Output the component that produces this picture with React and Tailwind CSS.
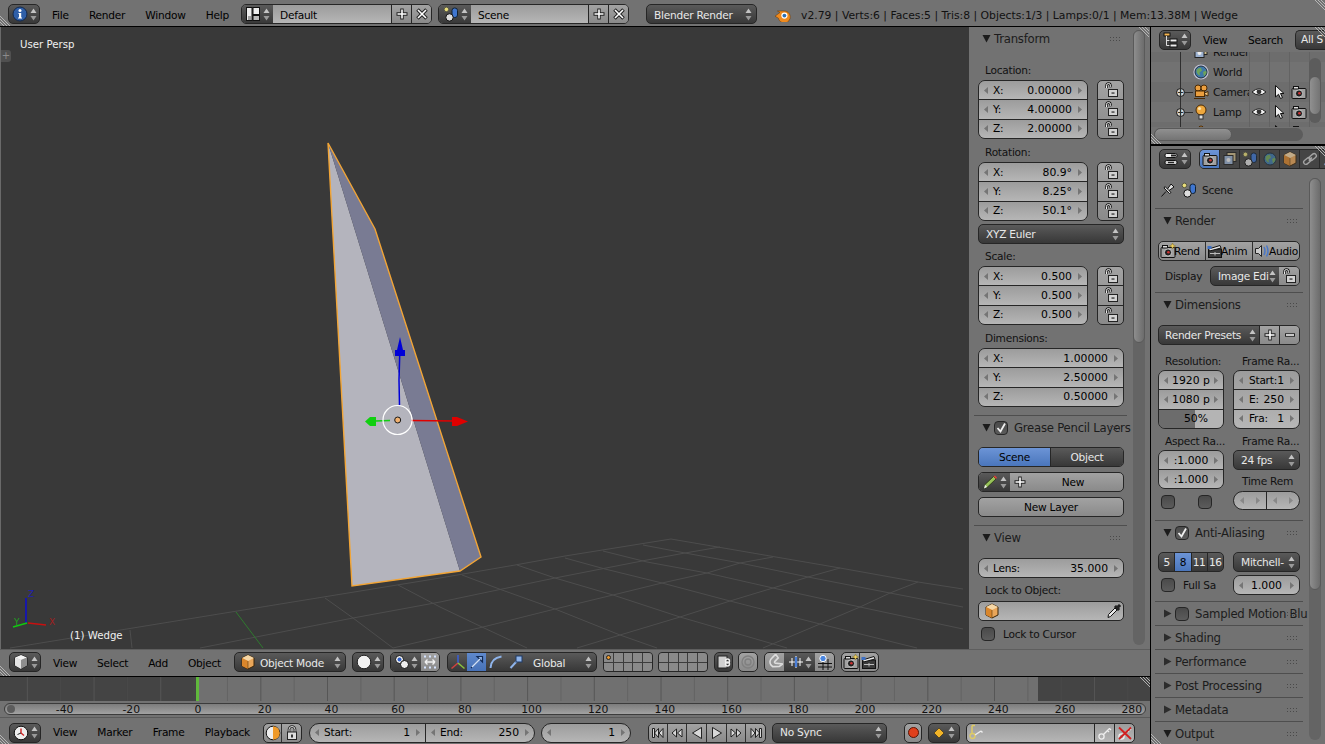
import React from 'react';

const dark = 'bg-gradient-to-b from-[#5a5a5a] to-[#383838] text-[#e8e8e8]';
const light = 'bg-gradient-to-b from-[#a2a2a2] to-[#8a8a8a] text-black';
const field = 'bg-gradient-to-b from-[#9c9c9c] to-[#b6b6b6] text-black';
const edge = 'border border-[#262626]';
const num = 'text-[10.8px] tracking-normal';

// small icons ------------------------------------------------------------
const S = ({ w = 16, h = 16, vb = '0 0 16 16', children, className = '' }) => (
  <svg width={w} height={h} viewBox={vb} className={`shrink-0 ${className}`}>{children}</svg>
);

const UD = () => (
  <S w={7} h={13} vb="0 0 7 13">
    <path d="M3.5 0.5L6.5 5H0.5Z" fill="#c4c4c4" />
    <path d="M3.5 12.5L6.5 8H0.5Z" fill="#9a9a9a" />
  </S>
);
const ArrowL = ({ c = '#757575' }) => <S w={4} h={7} vb="0 0 4 7"><path d="M4 0V7L0 3.5Z" fill={c} /></S>;
const ArrowR = ({ c = '#757575' }) => <S w={4} h={7} vb="0 0 4 7"><path d="M0 0V7L4 3.5Z" fill={c} /></S>;
const Plus = ({ c = '#fff' }) => <S w={14} h={14} vb="0 0 14 14"><path d="M7 1.5V12.5M1.5 7H12.5" stroke="#222" strokeWidth="3.4" /><path d="M7 2.5V11.5M2.5 7H11.5" stroke={c} strokeWidth="1.6" /></S>;
const Cross = () => <S w={14} h={14} vb="0 0 14 14"><path d="M2.5 2.5L11.5 11.5M11.5 2.5L2.5 11.5" stroke="#222" strokeWidth="3.6" /><path d="M3 3L11 11M11 3L3 11" stroke="#fff" strokeWidth="1.6" /></S>;
const Minus = () => <S w={14} h={14} vb="0 0 14 14"><path d="M2 7H12" stroke="#222" strokeWidth="3.4" /><path d="M3 7H11" stroke="#fff" strokeWidth="1.6" /></S>;

const InfoIco = () => <S><circle cx="8" cy="8" r="7" fill="#2f5fa8" stroke="#14284a" /><circle cx="8" cy="4.4" r="1.5" fill="#fff" /><path d="M6.5 7H9.2V11.5H10V12.6H6V11.5H7V8H6.5Z" fill="#fff" /></S>;
const LayoutIco = () => <S><rect x="1.5" y="1.5" width="5.5" height="13" fill="#eee" stroke="#111" /><rect x="8" y="1.5" width="6.5" height="7" fill="#eee" stroke="#111" /><rect x="8" y="9.5" width="6.5" height="5" fill="#bbb" stroke="#111" /><path d="M3 11h3M3 13h3" stroke="#555" /></S>;
const SceneIco = () => (
  <S>
    <circle cx="3.4" cy="3.4" r="2.3" fill="#e9de7a" stroke="#554" />
    <rect x="9" y="2" width="5.5" height="9.5" rx="2.5" fill="#3f76d0" stroke="#123" />
    <circle cx="6.5" cy="11.4" r="3.7" fill="#ddd" stroke="#111" />
  </S>
);
const BlenderLogo = () => (
  <S w={18} h={16} vb="0 0 18 16">
    <path d="M1 10.2L6 6.5 3.4 5h6.4A6 6 0 1 1 4.4 12.2L2 10.8Z" fill="#ef8a1e" stroke="#6a3500" strokeWidth=".5" />
    <circle cx="10.4" cy="9.6" r="3.1" fill="#fff" />
    <circle cx="10.4" cy="9.6" r="1.9" fill="#2d6fb5" />
  </S>
);
const LockOpen = () => (
  <S>
    <path d="M3.5 6V3.6A2 2 0 0 1 7.5 3.4L8 5.5" fill="none" stroke="#111" strokeWidth="2.4" />
    <path d="M3.5 6V3.6A2 2 0 0 1 7.5 3.4L8 5.5" fill="none" stroke="#eee" strokeWidth="1" />
    <rect x="5.5" y="7.5" width="9" height="7" fill="#d2d2d2" stroke="#222" />
    <rect x="8.5" y="10.4" width="3" height="1.3" fill="#333" />
  </S>
);
const LockClosed = () => (
  <S>
    <path d="M5 7V4.5a3 3 0 0 1 6 0V7" fill="none" stroke="#222" strokeWidth="2.6" />
    <path d="M5 7V4.5a3 3 0 0 1 6 0V7" fill="none" stroke="#ddd" strokeWidth="1" />
    <rect x="3.5" y="7" width="9" height="7.5" fill="#ddd" stroke="#222" />
    <rect x="7" y="9.5" width="2" height="3" fill="#333" />
  </S>
);
const Cube = () => (
  <S>
    <path d="M8 1L14 4V12L8 15 2 12V4Z" fill="#e9a65a" stroke="#3a2408" />
    <path d="M8 1L14 4 8 7 2 4Z" fill="#f6d7a6" />
    <path d="M8 7V15L2 12V4Z" fill="#d9862c" />
    <path d="M8 7V15" stroke="#3a2408" strokeWidth=".5" />
  </S>
);
const CubeView = () => (
  <S>
    <path d="M8 1L14 3.5V11.5L8 15 2 11.5V3.5Z" fill="#bcbcbc" stroke="#111" />
    <path d="M8 1L14 3.5 8 6 2 3.5Z" fill="#f4f4f4" />
    <path d="M8 6V15L2 11.5V3.5Z" fill="#e4e4e4" />
    <path d="M8 6V15L14 11.5V3.5Z" fill="#8e8e8e" />
  </S>
);
const Pencil = () => (
  <S>
    <path d="M2 14.5L3 10.5 11.5 2.5 14 5 5.5 13Z" fill="#98c25a" stroke="#26350f" strokeWidth=".8" />
    <path d="M11.5 2.5L14 5 15 3.6 13 1.4Z" fill="#d8403a" />
    <path d="M2 14.5L3 10.8 5.2 13Z" fill="#eee" />
  </S>
);
const Dropper = () => (
  <S>
    <path d="M2 14.5L2.5 11.5 9 5 11 7 4.5 13.5Z" fill="#e8e8e8" stroke="#111" />
    <path d="M8.5 4L10 2.5 11 3.5 13 1.5 14.5 3 12.5 5 13.5 6 12 7.5Z" fill="#222" stroke="#111" />
  </S>
);
const OutlinerIco = () => (
  <S>
    <rect x="1" y="1" width="6" height="3" fill="#f5b550" stroke="#111" />
    <path d="M3.5 4V13.5H7M3.5 8.5H7" stroke="#ddd" fill="none" />
    <rect x="7" y="7" width="7" height="3" fill="#eee" stroke="#111" />
    <rect x="7" y="12" width="7" height="3" fill="#eee" stroke="#111" />
  </S>
);
const PropsIco = () => (
  <S>
    <rect x="2" y="2.5" width="12" height="4" rx="1.5" fill="#f0f0f0" stroke="#111" />
    <rect x="8" y="3.5" width="5" height="2" fill="#222" />
    <rect x="2" y="9.5" width="12" height="4" rx="1.5" fill="#d0d0d0" stroke="#111" />
    <path d="M5 11.5H11" stroke="#222" strokeWidth="1.4" />
  </S>
);
const ClockIco = () => <S><circle cx="8" cy="8" r="6.8" fill="#eee" stroke="#111" /><path d="M8 3.5V8L11 10.5" stroke="#c22" fill="none" strokeWidth="1.4" /><path d="M8 8L4.5 9.5" stroke="#222" /></S>;
const Globe = ({ ring }) => (
  <S>
    {ring && <circle cx="8" cy="8" r="7.6" fill="#c5c5d8" />}
    <circle cx="8" cy="8" r="6" fill="#3e78a8" stroke="#1c2d3c" />
    <path d="M3.8 5.5Q6 3.4 8 4L9 6.5 6.5 8.5 7 11.5 5 10.5 3.5 8ZM10 8l3 -1.5 .6 2.5L11 12.5Z" fill="#6fa35a" />
  </S>
);
const CameraObj = () => (
  <S>
    <circle cx="5" cy="4" r="3" fill="#eb9f3f" stroke="#4a2a05" />
    <circle cx="11" cy="4" r="3" fill="#eb9f3f" stroke="#4a2a05" />
    <rect x="2.5" y="7" width="9" height="5.5" fill="#eb9f3f" stroke="#4a2a05" />
    <path d="M11.5 9L15 7.5V12L11.5 10.5ZM1 14.5H12" stroke="#4a2a05" fill="#f5c77e" />
  </S>
);
const LampObj = () => (
  <S>
    <circle cx="8" cy="6" r="5" fill="#eea83e" stroke="#4a2a05" />
    <circle cx="6.5" cy="4.5" r="1.6" fill="#fbe2ae" />
    <rect x="6" y="11" width="4" height="4" fill="#ddd" stroke="#333" />
  </S>
);
const MeshObj = () => <S><path d="M4 5Q8 -1 12 5L14 12H2Z" fill="#eb9f3f" stroke="#4a2a05" /></S>;
const Eye = () => <S><path d="M1 8Q8 1.5 15 8Q8 14 1 8Z" fill="#f0f0f0" stroke="#222" /><circle cx="8" cy="7.8" r="2.4" fill="#333" /></S>;
const Cursor = () => <S><path d="M4.5 1.5V13L7.5 10.3 9.5 14.5 11.5 13.6 9.5 9.5H13Z" fill="#eee" stroke="#111" /></S>;
const RenderCam = ({ star }) => (
  <S>
    <rect x="1" y="4.5" width="14" height="10" rx="1" fill="#a0a0a0" stroke="#111" />
    <rect x="2.5" y="2.5" width="5" height="2.5" fill="#ddd" stroke="#111" />
    <circle cx="8" cy="9.5" r="3.6" fill="#222" stroke="#ddd" strokeWidth=".8" />
    <circle cx="8.4" cy="9.2" r="1.3" fill="#c33" />
    {star && <path d="M12.5 0L13.4 2.1 15.6 3 13.4 3.9 12.5 6 11.6 3.9 9.4 3 11.6 2.1Z" fill="#f0d060" stroke="#6a5a10" strokeWidth=".4" />}
  </S>
);
const Clapper = () => (
  <S>
    <rect x="1.5" y="6" width="13" height="8.5" fill="#3a3a3a" stroke="#111" />
    <path d="M1.5 6L13 2.5 14 5 2.5 8Z" fill="#e5e5e5" stroke="#111" />
    <path d="M3 10.5H13" stroke="#bbb" />
    <path d="M8 9V12.5" stroke="#bbb" />
    <rect x="0.5" y="3" width="4" height="3" fill="#3c6fc4" />
  </S>
);
const Speaker = () => (
  <S>
    <path d="M1.5 5.5H4.5L7.5 2.5V13.5L4.5 10.5H1.5Z" fill="#ccc" stroke="#222" />
    <path d="M10 4Q12 8 10 12M12.5 2.5Q15.5 8 12.5 13.5" stroke="#4a78c8" strokeWidth="1.5" fill="none" />
  </S>
);
const Pin = () => <S><path d="M1.5 14.5L6 9.5M5 4.5L11 10.5 9.5 11.5 4 6ZM7.5 7L11 2 14 5 9 8.5" fill="#e2e2e2" stroke="#111" /></S>;
const RenderLayers = () => <S><rect x="5" y="1.5" width="9" height="9" fill="#ccb98a" stroke="#222" /><rect x="2" y="4.5" width="9" height="9" fill="#9ab0cf" stroke="#222" /><circle cx="6.5" cy="9" r="2" fill="#eee" /></S>;
const Link = () => <S><path d="M7 10L10 6.5" stroke="#ccc" strokeWidth="1.5" /><rect x="1.2" y="8" width="8" height="4.4" rx="2.2" transform="rotate(-40 5 10)" fill="none" stroke="#ccc" strokeWidth="1.4" /><rect x="6.8" y="3.6" width="8" height="4.4" rx="2.2" transform="rotate(-40 11 6)" fill="none" stroke="#ccc" strokeWidth="1.4" /></S>;
const Axis = () => <S><path d="M8 9V1" stroke="#3a5ed0" strokeWidth="1.6" /><path d="M8 9L1.5 14.5" stroke="#d04040" strokeWidth="1.6" /><path d="M8 9L14.5 14.5" stroke="#88c040" strokeWidth="1.6" /></S>;
const MoveIco = () => <S><path d="M2 14L11 5M8 2.5H13.5V8Z" stroke="#112a55" fill="#8fb4ea" strokeWidth="1.2" /><path d="M3 13L11 5" stroke="#cfe0fa" strokeWidth="1.6" /></S>;
const RotIco = () => <S><path d="M2.5 14Q3 4 13.5 2.5" stroke="#8fb4ea" strokeWidth="2" fill="none" /></S>;
const ScaleIco = () => <S><path d="M2.5 14L9 7" stroke="#8fb4ea" strokeWidth="2" /><rect x="8" y="2" width="6" height="6" fill="#8fb4ea" stroke="#1e3a66" /></S>;
const Sphere = () => <S><circle cx="8" cy="8" r="6.8" fill="#f2f2f2" stroke="#222" /></S>;
const Pivot = () => <S><circle cx="5.5" cy="5.5" r="4" fill="#eee" stroke="#111" /><circle cx="10.5" cy="10.5" r="4" fill="#eee" stroke="#111" /><circle cx="5.5" cy="5.5" r="2" fill="#3060c8" /></S>;
const Manip = () => <S><path d="M3 8H13M3 8L5.5 5.5M3 8L5.5 10.5M13 8L10.5 5.5M13 8L10.5 10.5" stroke="#f0f0f0" strokeWidth="1.4" fill="none" /><path d="M2 2.5h2M7 2.5h2M12 2.5h2M2 13.5h2M7 13.5h2M12 13.5h2" stroke="#d6e4ff" strokeWidth="2" /></S>;
const LocalView = () => <S><rect x="2" y="2" width="9" height="12" fill="#cfcfcf" stroke="#222" /><rect x="9.5" y="5" width="4" height="4" rx="2" fill="none" stroke="#eee" strokeWidth="1.4" /><rect x="9.5" y="8" width="4" height="4" rx="2" fill="none" stroke="#eee" strokeWidth="1.4" /></S>;
const Target = () => <S><circle cx="8" cy="8" r="6" fill="none" stroke="#808080" strokeWidth="1.4" /><circle cx="8" cy="8" r="3" fill="none" stroke="#808080" strokeWidth="1.4" /></S>;
const Magnet = () => <S><path d="M3 8A5 5 0 0 1 8 3L13 2V6.5L8 7.5Q7 8 7.5 9L13 14 9 14 3.5 10.5Z" fill="none" stroke="#ddd" strokeWidth="1.6" transform="rotate(-35 8 8)" /></S>;
const SnapInc = () => <S><path d="M1 8H15" stroke="#fff" /><path d="M4 4V12M8 2V14M12 4V12" stroke="#fff" /><rect x="6.8" y="3" width="2.4" height="10" fill="#4a7fd8" /></S>;
const SnapGrid = () => <S><path d="M1 9.5H15M1 13H15M6 5V16M11 5V16" stroke="#111" /><circle cx="6" cy="4.5" r="3.2" fill="#4a86e0" stroke="#fff" /></S>;
const Preview = () => <S><circle cx="8" cy="8" r="6.8" fill="#eee" stroke="#111" /><path d="M8 8V1.2A6.8 6.8 0 0 1 14.8 8 6.8 6.8 0 0 1 8 14.8Z" fill="#ef9a2a" /></S>;
const KeyIco = ({ off }) => (
  <S>
    <circle cx="4.5" cy="11.5" r="2.6" fill="none" stroke="#eee" strokeWidth="1.3" />
    <path d="M6.5 9.5L12.5 3.5M10.5 5.5L12 7M12.5 3.5L14 5" stroke="#eee" strokeWidth="1.4" />
    {off && <path d="M2 2.5L14 14M14 2.5L2 14" stroke="#d02020" strokeWidth="1.8" />}
  </S>
);
const KeySetIco = () => <S w={16} h={18} vb="0 0 16 18"><path d="M3 1.5V9" stroke="#dfcb64" strokeWidth="1.5" /><path d="M3 1.5H6" stroke="#dfcb64" strokeWidth="1.5" /><circle cx="3.5" cy="12" r="2.5" fill="none" stroke="#dfcb64" strokeWidth="1.4" /><path d="M6 11L12 7M12 7L13.5 8.5" stroke="#eee" strokeWidth="1.4" /></S>;
const Diamond = () => <S w={12} h={12} vb="0 0 12 12"><path d="M6 1L11 6 6 11 1 6Z" fill="#f2b428" stroke="#111" strokeWidth=".5" /></S>;
const Rec = () => <S w={13} h={13} vb="0 0 13 13"><circle cx="6.5" cy="6.5" r="5" fill="#e0401c" stroke="#5a1405" /></S>;
const Tr = ({ d }) => <S w={14} h={14} vb="0 0 14 14"><path d={d} fill="#d8d8d8" stroke="#111" strokeWidth=".9" /></S>;

// corner hatch -----------------------------------------------------------
const Hatch = ({ pos, flip }) => (
  <svg width="11" height="11" viewBox="0 0 11 11" className={`absolute ${pos}`}>
    {flip
      ? <path d="M0 4L7 11M0 7L4 11M0 1L10 11" stroke="#bdbdbd" strokeWidth=".9" />
      : <path d="M7 0L11 4M4 0L11 7M1 0L11 10" stroke="#bdbdbd" strokeWidth=".9" />}
  </svg>
);

// widgets ------------------------------------------------------------------
const Sel = ({ icon, w = 'w-[32px]', h = 'h-[20px]' }) => (
  <div className={`flex ${w} ${h} shrink-0 items-center justify-center gap-[2px] rounded-[5px] ${edge} ${dark}`}>
    {icon}<UD />
  </div>
);
const Menu = ({ items, w, ml = 'ml-[13px]', tp = 'pt-[2px]' }) => (
  <div className={`flex ${w} ${ml} ${tp} shrink-0 justify-between text-black`}>
    {items.map((t) => <span key={t}>{t}</span>)}
  </div>
);
const Tri = ({ open = true }) => (
  <S w={9} h={9} vb="0 0 9 9">
    {open ? <path d="M0.5 1H8.5L4.5 8.5Z" fill="#1c1c1c" /> : <path d="M1 0.5V8.5L8.5 4.5Z" fill="#2c2c2c" />}
  </S>
);
const Dots = ({ right }) => (
  <svg width="10" height="6" viewBox="0 0 10 6" className={`absolute top-1/2 -mt-[2px] ${right}`}>
    {[0, 3, 6, 9].map((x) => <g key={x}><rect x={x} y="0" width="1" height="1" fill="#4a4a4a" /><rect x={x} y="3" width="1" height="1" fill="#4a4a4a" /></g>)}
  </svg>
);
const Check = ({ on, size = 'w-[14px] h-[14px]' }) => (
  <div className={`flex ${size} shrink-0 items-center justify-center rounded-[4px] ${edge} bg-gradient-to-b from-[#4a4a4a] to-[#5c5c5c]`}>
    {on && <svg width="12" height="12" viewBox="0 0 12 12"><path d="M2.5 6L5.5 9.5 10 1.5" stroke="#f0f0f0" strokeWidth="1.8" fill="none" /></svg>}
  </div>
);
const Sep = ({ cls }) => <div className={`h-px shrink-0 bg-[#4e4e4e] ${cls}`} />;
const Head = ({ title, open = true, check, on, dotsAt, cls = 'pl-[13px]' }) => (
  <div className={`relative flex h-[23px] shrink-0 items-center text-[11.7px] leading-[15px] text-[#1c1c1c] ${cls}`}>
    <Tri open={open} />
    {check && <div className="ml-[3px]"><Check on={on} /></div>}
    <span className={`whitespace-nowrap pt-[2px] ${check ? 'ml-[6px]' : 'ml-[3px]'}`}>{title}</span>
    <Dots right={dotsAt} />
  </div>
);
const Group = ({ rows, h = 'h-[59px]', w = 'w-full', center }) => (
  <div className={`flex ${h} ${w} shrink-0 flex-col overflow-hidden rounded-[7px] ${edge}`}>
    {rows.map((r, i) => (
      r.pct ? (
        <div key={i} className="flex flex-1 items-center justify-center border-t border-[#262626] bg-[linear-gradient(90deg,#6c6c6c_56%,#b4b4b4_56%)] text-black">
          <span className={`ml-[10px] ${num}`}>{r.pct}</span>
        </div>
      ) : (
        <div key={i} className={`flex flex-1 items-center px-[5px] text-black ${field} ${i ? 'border-t border-[#262626]' : ''}`}>
          <ArrowL />
          {center ? (
            <span className={`flex-1 text-center whitespace-nowrap ${num}`}>{r.v}</span>
          ) : (
            <>
              <span className="ml-[5px]">{r.k}</span>
              <span className={`ml-auto mr-[6px] ${num}`}>{r.v}</span>
            </>
          )}
          <ArrowR />
        </div>
      )
    ))}
  </div>
);
const LockCol = () => (
  <div className={`ml-[9px] flex h-[59px] w-[27px] shrink-0 flex-col overflow-hidden rounded-[5px] ${edge} ${light}`}>
    {[0, 1, 2].map((i) => <div key={i} className={`flex flex-1 items-center justify-center ${i ? 'border-t border-[#262626]' : ''}`}><LockOpen /></div>)}
  </div>
);
const Label = ({ children, cls }) => <div className={`h-[14px] shrink-0 leading-[14px] whitespace-nowrap text-[#111] ${cls}`}>{children}</div>;
const DarkDrop = ({ label, w = 'w-full', cls = '', pl = 'pl-[7px]', tp = '' }) => (
  <div className={`flex h-[20px] ${w} shrink-0 items-center justify-between rounded-[5px] ${edge} ${dark} ${pl} pr-[4px] ${cls}`}>
    <span className={`whitespace-nowrap ${tp}`}>{label}</span><UD />
  </div>
);
const Tb = ({ children, w = 'w-[19px]', on, cls = '' }) => (
  <div className={`flex h-full ${w} shrink-0 items-center justify-center ${on ? 'bg-gradient-to-b from-[#5f89cc] to-[#4772b8]' : ''} ${cls}`}>{children}</div>
);
const BtnGroup = ({ ml, bg = light, children }) => (
  <div className={`flex h-[20px] shrink-0 divide-x divide-[#303030] overflow-hidden rounded-[5px] ${edge} ${bg} ${ml}`}>{children}</div>
);
const Layers = ({ ml, active }) => (
  <div className={`grid h-[20px] w-[50px] shrink-0 grid-cols-5 grid-rows-2 gap-px overflow-hidden rounded-[4px] ${edge} bg-[#3c3c3c] ${ml}`}>
    {Array.from({ length: 10 }).map((_, i) => (
      <div key={i} className="flex items-center justify-center bg-[#8a8a8a]">
        {active && i === 0 && <div className="h-[5px] w-[5px] rounded-full border border-[#222] bg-[#ef9a2a]" />}
      </div>
    ))}
  </div>
);

// viewport -----------------------------------------------------------------
const gridLines = [
  '10,648 348,593 440,578 515,565 565,556 671,539',
  '200,648 353,618 440,602 555,578 647,560 685,553 720,547',
  '393,648 483,627 555,609 613,595 662,583 707,573 740,563 773,557',
  '577,648 620,635 680,617 730,601 773,588 808,577 840,568',
  '763,648 820,624 860,607 890,593 918,582',
  '671,539 840,568 918,582 963,589',
  '643,545 685,553 740,563 808,577 890,593 963,607',
  '603,551 647,562 707,573 773,588 860,607 963,629',
  '565,558 605,569 662,583 730,601 820,624 917,648',
  '517,565 555,578 613,595 680,617 787,648',
  '462,575 502,590 555,609 620,635 657,648',
  '398,585 440,607 482,627 527,648',
  '325,598 353,618 393,648',
  '130,630 132,648',
];

const Scene3D = () => (
  <svg viewBox="0 27 969 622" width="969" height="622" className="absolute -left-px top-0">
    {gridLines.map((p) => <polyline key={p} points={p} fill="none" stroke="#4d4d4d" strokeWidth="1" />)}
    <path d="M236 612L263 648" stroke="#2f7a2f" />
    <polygon points="328,143 352,586 460,571" fill="#b4b4bd" />
    <polygon points="328,143 375,229 481,557 460,571" fill="#797b93" />
    <polygon points="328,143 375,229 481,557 460,571 352,586" fill="none" stroke="#f2a536" strokeWidth="1.4" />
    <path d="M399.5 405L399 380 400 345" stroke="#0000d8" strokeWidth="1.5" fill="none" />
    <path d="M400 337L403 350 405 350 405 356 395 356 395 350 397 350Z" fill="#0000d8" />
    <path d="M411 420.5L455 421" stroke="#e00000" strokeWidth="1.4" />
    <path d="M452 417H457L468 421.5 457 426H452Z" fill="#e00000" />
    <path d="M375 421L390 420.5" stroke="#10d010" strokeWidth="1.4" />
    <path d="M365 421.5L370 417H376V426H370Z" fill="#10d010" />
    <circle cx="397.5" cy="420" r="14.5" fill="none" stroke="#fff" strokeWidth="1.2" />
    <circle cx="397.7" cy="420" r="3" fill="#f0b070" stroke="#1a1a1a" />
    <path d="M26 623V598" stroke="#1010c8" strokeWidth="1.6" />
    <path d="M28 623L46 625" stroke="#c81010" strokeWidth="1.6" />
    <path d="M27 623L13 627" stroke="#10c810" strokeWidth="1.8" />
    <text x="28" y="597" fill="#2020b0" fontSize="9" fontFamily="DejaVu Sans">Z</text>
    <text x="49" y="625" fill="#a02020" fontSize="9" fontFamily="DejaVu Sans">X</text>
    <text x="14" y="625" fill="#20a020" fontSize="9" fontFamily="DejaVu Sans">Y</text>
  </svg>
);

// side panel ---------------------------------------------------------------
const NPanel = () => (
  <div className="flex w-[180px] shrink-0 bg-[#727272]">
    <div className="flex w-[164px] shrink-0 flex-col pl-[9px] pr-[9px]">
      <div className="-ml-[9px] w-[164px]">
        <Head title="Transform" dotsAt="left-[141px]" />
      </div>
      <Label cls="mt-[13px] pl-[7px]">Location:</Label>
      <div className="mt-[3px] flex">
        <Group w="w-[110px]" rows={[{ k: 'X:', v: '0.00000' }, { k: 'Y:', v: '4.00000' }, { k: 'Z:', v: '2.00000' }]} />
        <LockCol />
      </div>
      <Label cls="mt-[6px] pl-[7px]">Rotation:</Label>
      <div className="mt-[3px] flex">
        <Group w="w-[110px]" rows={[{ k: 'X:', v: '80.9°' }, { k: 'Y:', v: '8.25°' }, { k: 'Z:', v: '50.1°' }]} />
        <LockCol />
      </div>
      <DarkDrop label="XYZ Euler" cls="mt-[3px]" />
      <Label cls="mt-[5px] pl-[7px]">Scale:</Label>
      <div className="mt-[3px] flex">
        <Group w="w-[110px]" rows={[{ k: 'X:', v: '0.500' }, { k: 'Y:', v: '0.500' }, { k: 'Z:', v: '0.500' }]} />
        <LockCol />
      </div>
      <Label cls="mt-[6px] pl-[7px]">Dimensions:</Label>
      <div className="mt-[3px]">
        <Group rows={[{ k: 'X:', v: '1.00000' }, { k: 'Y:', v: '2.50000' }, { k: 'Z:', v: '0.50000' }]} />
      </div>
      <Sep cls="mt-[8px] -ml-[4px] w-[153px]" />
      <div className="-ml-[9px] w-[164px]">
        <Head title="Grease Pencil Layers" check on dotsAt="left-[141px]" />
      </div>
      <div className={`mt-[8px] flex h-[20px] shrink-0 overflow-hidden rounded-[5px] ${edge}`}>
        <div className="flex w-[71px] items-center justify-center bg-gradient-to-b from-[#6c94d6] to-[#4a76bc] text-black">Scene</div>
        <div className={`flex flex-1 items-center justify-center border-l border-[#262626] ${dark}`}>Object</div>
      </div>
      <div className={`mt-[5px] flex h-[20px] shrink-0 overflow-hidden rounded-[5px] ${edge} ${light}`}>
        <div className={`flex w-[31px] items-center justify-center gap-[2px] ${dark}`}><Pencil /><UD /></div>
        <div className="flex w-[20px] items-center justify-center"><Plus /></div>
        <div className="flex flex-1 items-center justify-center pr-[7px]">New</div>
      </div>
      <div className={`mt-[5px] flex h-[20px] shrink-0 items-center justify-center rounded-[5px] ${edge} ${light}`}>New Layer</div>
      <Sep cls="mt-[8px] -ml-[4px] w-[153px]" />
      <div className="-ml-[9px] w-[164px]">
        <Head title="View" dotsAt="left-[141px]" />
      </div>
      <div className="mt-[9px]">
        <Group h="h-[20px]" rows={[{ k: 'Lens:', v: '35.000' }]} />
      </div>
      <Label cls="mt-[5px] pl-[7px]">Lock to Object:</Label>
      <div className={`mt-[4px] flex h-[20px] shrink-0 items-center justify-between rounded-[5px] px-[1px] ${edge} ${field}`}>
        <div className="ml-[4px]"><Cube /></div><Dropper />
      </div>
      <div className="mt-[6px] flex items-center pl-[3px] text-[#111]">
        <Check />
        <span className="ml-[8px]">Lock to Cursor</span>
      </div>
    </div>
    <div className="mt-[3px] h-[615px] w-[12px] shrink-0 rounded-full bg-[#646464]">
      <div className="h-[313px] rounded-full border border-[#5a5a5a] bg-gradient-to-r from-[#8e8e8e] to-[#6c6c6c]" />
    </div>
  </div>
);

const Viewport = () => (
  <div className="relative w-[969px] shrink-0 overflow-hidden border-l border-[#6a6a6a] bg-[#393939] text-[10.2px] tracking-normal">
    <Scene3D />
    <span className="absolute left-[19px] top-[11px] text-[#f0f0f0]">User Persp</span>
    <span className="absolute left-[69px] top-[602px] text-[#f0f0f0]">(1) Wedge</span>
    <div className="absolute left-0 top-[23px] flex h-[12px] w-[10px] items-center justify-center rounded-r-[3px] bg-[#505050] text-[10px] leading-none text-[#8c8c8c]">+</div>
  </div>
);

// timeline -----------------------------------------------------------------
const ticks = Array.from({ length: 35 }, (_, i) => -6.5 + i * 33.35);
const rulerLabels = Array.from({ length: 17 }, (_, i) => -40 + i * 20);

const Timeline = () => (
  <div className="relative flex h-[41px] shrink-0 flex-col bg-[#727272]">
    <div className="relative flex h-[24px] shrink-0 bg-[#707070]">
      <div className="w-[196px] bg-[#444444]" />
      <div className="w-[3px] bg-[#60b83c]" />
      <div className="flex-1" />
      <div className="w-[112px] bg-[#444444]" />
      <svg width="1150" height="24" className="absolute left-0 top-0">
        {ticks.map((x, i) => <path key={i} d={`M${x + 0.5} 0V24`} stroke={i % 2 ? '#5e5e5e' : '#4c4c4c'} strokeOpacity=".7" />)}
      </svg>
    </div>
    <div className="relative mx-[4px] mt-[2px] h-[12px] rounded-full border border-[#3c3c3c] bg-gradient-to-b from-[#7c7c7c] to-[#a2a2a2]">
      <div className="absolute left-[2px] top-[1px] h-[8px] w-[8px] rounded-full bg-[#5c5c5c]" />
      {rulerLabels.map((n) => (
        <span key={n} className={`absolute top-[-1px] -translate-x-1/2 leading-[14px] text-[#111] ${num}`} style={{ left: 193 + (n * 66.7) / 20 }}>{n}</span>
      ))}
    </div>
    <div className="mt-[2px] h-px bg-[#5a5a5a]" />
    <Hatch pos="right-0 top-0" />
  </div>
);

const Header3D = () => (
  <div className="relative flex h-[27px] shrink-0 items-center border-t border-[#5e5e5e] bg-[#727272] pb-[2px] pl-[9px]">
    <Sel icon={<CubeView />} />
    <Menu items={['View', 'Select', 'Add', 'Object']} w="w-[168px]" ml="ml-[12px]" />
    <div className={`ml-[13px] flex h-[20px] w-[112px] shrink-0 items-center rounded-[5px] pl-[5px] pr-[4px] ${edge} ${dark}`}>
      <Cube /><span className="ml-[4px] flex-1 whitespace-nowrap pt-[2px]">Object Mode</span><UD />
    </div>
    <div className={`ml-[6px] flex h-[20px] w-[32px] shrink-0 items-center justify-center gap-[2px] rounded-[5px] ${edge} ${dark}`}><Sphere /><UD /></div>
    <div className={`ml-[6px] flex h-[20px] shrink-0 overflow-hidden rounded-[5px] ${edge}`}>
      <div className={`flex w-[30px] items-center justify-center gap-[1px] ${dark}`}><Pivot /><UD /></div>
      <div className={`flex w-[18px] items-center justify-center ${light}`}><Manip /></div>
    </div>
    <div className={`ml-[7px] flex h-[20px] shrink-0 overflow-hidden rounded-[5px] ${edge} ${dark}`}>
      <Tb><Axis /></Tb>
      <Tb on><MoveIco /></Tb>
      <Tb w="w-[20px]"><RotIco /></Tb>
      <Tb w="w-[20px]"><ScaleIco /></Tb>
      <div className="flex w-[70px] items-center justify-between pl-[7px] pr-[4px]"><span className="pt-[2px]">Global</span><UD /></div>
    </div>
    <Layers ml="ml-[6px]" active />
    <Layers ml="ml-[5px]" />
    <BtnGroup ml="ml-[6px]" bg={dark}><Tb w="w-[17px]"><LocalView /></Tb></BtnGroup>
    <BtnGroup ml="ml-[5px]"><Tb w="w-[18px]"><Target /></Tb></BtnGroup>
    <div className={`ml-[6px] flex h-[20px] shrink-0 overflow-hidden rounded-[5px] ${edge} ${light}`}>
      <Tb><Magnet /></Tb>
      <div className={`flex w-[31px] items-center justify-center gap-[1px] ${dark}`}><SnapInc /><UD /></div>
      <Tb><SnapGrid /></Tb>
    </div>
    <BtnGroup ml="ml-[6px]"><Tb w="w-[18px]"><RenderCam star /></Tb><Tb w="w-[18px]"><Clapper /></Tb></BtnGroup>
    <Hatch pos="bottom-0 left-0" flip />
  </div>
);

const HeaderTime = () => (
  <div className="relative flex h-[27px] shrink-0 items-center bg-[#727272] pl-[9px] pt-[2px]">
    <Sel icon={<ClockIco />} />
    <Menu items={['View', 'Marker', 'Frame', 'Playback']} w="w-[197px]" ml="ml-[12px]" tp="" />
    <BtnGroup ml="ml-[13px]"><Tb w="w-[18px]"><Preview /></Tb><Tb><LockClosed /></Tb></BtnGroup>
    <div className={`ml-[7px] flex h-[20px] w-[226px] shrink-0 overflow-hidden rounded-full ${edge} ${field}`}>
      <div className="flex w-[116px] items-center border-r border-[#262626] px-[5px]"><ArrowL /><span className="ml-[5px]">Start:</span><span className={`ml-auto mr-[6px] ${num}`}>1</span><ArrowR /></div>
      <div className="flex flex-1 items-center px-[5px]"><ArrowL /><span className="ml-[5px]">End:</span><span className={`ml-auto mr-[6px] ${num}`}>250</span><ArrowR /></div>
    </div>
    <div className={`ml-[6px] flex h-[20px] w-[90px] shrink-0 items-center rounded-full px-[5px] ${edge} ${field}`}><ArrowL /><span className={`ml-auto mr-[6px] ${num}`}>1</span><ArrowR /></div>
    <BtnGroup ml="ml-[17px]">
      <Tb><Tr d="M1.5 2.5V11.5H3.5V2.5ZM7.5 2.5L3.5 7 7.5 11.5ZM12 2.5L8 7 12 11.5Z" /></Tb>
      <Tb><Tr d="M6.5 3L2 7 6.5 11ZM12 3L7.5 7 12 11Z" /></Tb>
      <Tb w="w-[20px]"><Tr d="M11.5 1.5L2.5 7 11.5 12.5Z" /></Tb>
      <Tb w="w-[20px]"><Tr d="M2.5 1.5L11.5 7 2.5 12.5Z" /></Tb>
      <Tb><Tr d="M2 3L6.5 7 2 11ZM7.5 3L12 7 7.5 11Z" /></Tb>
      <Tb><Tr d="M2 2.5L6 7 2 11.5ZM6.5 2.5L10.5 7 6.5 11.5ZM10.5 2.5V11.5H12.5V2.5Z" /></Tb>
    </BtnGroup>
    <DarkDrop label="No Sync" w="w-[115px]" cls="ml-[6px]" />
    <BtnGroup ml="ml-[17px]"><Tb w="w-[16px]"><Rec /></Tb></BtnGroup>
    <div className={`ml-[6px] flex h-[20px] w-[32px] shrink-0 items-center justify-center gap-[3px] rounded-[5px] ${edge} ${dark}`}><Diamond /><UD /></div>
    <div className={`ml-[6px] flex h-[20px] w-[169px] shrink-0 overflow-hidden rounded-[5px] ${edge} ${field}`}>
      <div className="flex flex-1 items-center pl-[2px]"><KeySetIco /></div>
      <Tb w="w-[20px]" cls="border-l border-[#262626]"><KeyIco /></Tb>
      <Tb w="w-[20px]" cls="border-l border-[#262626]"><KeyIco off /></Tb>
    </div>
    <Hatch pos="bottom-0 left-0" flip />
  </div>
);

// outliner -----------------------------------------------------------------
const Expander = () => (
  <div className="flex h-[9px] w-[9px] items-center justify-center rounded-full border border-[#111] bg-[#d8d8d8] text-[9px] leading-none text-black">+</div>
);
const treeRows = [
  { name: 'Render', icon: <RenderLayers />, exp: false, bg: 'bg-[#6d6d6d]', noCols: true },
  { name: 'World', icon: <Globe ring />, exp: false, bg: 'bg-[#727272]', noCols: true },
  { name: 'Camera', icon: <CameraObj />, exp: true, bg: 'bg-[#6d6d6d]' },
  { name: 'Lamp', icon: <LampObj />, exp: true, bg: 'bg-[#727272]' },
  { name: 'Wedge', icon: <MeshObj />, exp: true, bg: 'bg-[#6d6d6d]' },
];

const Outliner = () => (
  <div className="relative flex h-[117px] shrink-0 flex-col bg-[#727272]">
    <div className="flex h-[25px] shrink-0 items-center pl-[8px]">
      <Sel icon={<OutlinerIco />} />
      <Menu items={['View', 'Search']} w="w-[80px]" ml="ml-[12px]" />
      <div className={`ml-[12px] flex h-[20px] w-[32px] shrink-0 items-center overflow-hidden rounded-l-[5px] border-r-0 pl-[5px] whitespace-nowrap ${edge} ${dark}`}>All S</div>
    </div>
    <div className="relative h-[92px] overflow-hidden">
      <div className="-mt-[10px]">
        {treeRows.map((r) => (
          <div key={r.name} className={`relative flex h-[20px] items-center ${r.bg}`}>
            <div className="flex w-[34px] shrink-0 items-center justify-end">
              {r.exp && <Expander />}
            </div>
            {r.exp ? <div className="h-px w-[8px] bg-[#2e2e2e]" /> : <div className="w-[8px]" />}
            <div className="flex w-[16px] justify-center">{r.icon}</div>
            <span className="ml-[4px] w-[36px] overflow-hidden whitespace-nowrap text-[#111]">{r.name}</span>
            {!r.noCols && <div className="flex"><div className="flex w-[20px] justify-center"><Eye /></div><div className="flex w-[20px] justify-center"><Cursor /></div><div className="flex w-[20px] justify-center"><RenderCam /></div></div>}
          </div>
        ))}
      </div>
      <div className="absolute bottom-0 left-[29px] top-0 w-px bg-[#2e2e2e]" />
      <div className="absolute bottom-0 left-[98px] top-0 w-px bg-[#636363]" />
      <div className="absolute bottom-0 left-[118px] top-0 w-px bg-[#636363]" />
      <div className="absolute bottom-0 left-[138px] top-0 w-px bg-[#636363]" />
      <div className="absolute bottom-0 left-[158px] top-0 w-px bg-[#636363]" />
      <div className="absolute bottom-0 left-0 h-[17px] w-full bg-[#727272] px-[3px] pt-[1px]">
        <div className="h-[13px] w-[149px] rounded-full bg-[#5c5c5c]">
          <div className="h-[13px] w-[78px] rounded-full border border-[#5a5a5a] bg-gradient-to-b from-[#909090] to-[#747474]" />
        </div>
      </div>
    </div>
    <div className="absolute left-[158px] top-[31px] h-[65px] w-[12px] rounded-full bg-[#5c5c5c] pt-[18px]">
      <div className="h-[39px] rounded-full border border-[#5a5a5a] bg-gradient-to-r from-[#909090] to-[#747474]" />
    </div>
    <Hatch pos="right-0 top-0" />
    <Hatch pos="bottom-0 left-0" flip />
  </div>
);

// properties ---------------------------------------------------------------
const tabs = [<RenderCam />, <RenderLayers />, <SceneIco />, <Globe />, <Cube />, <Link />, <ScaleIco />];

const Properties = () => (
  <div className="relative flex min-h-0 flex-1 flex-col bg-[#727272]">
    <div className="flex h-[25px] shrink-0 items-center overflow-hidden pl-[8px]">
      <Sel icon={<PropsIco />} />
      <div className={`ml-[8px] flex h-[20px] shrink-0 ${edge} rounded-l-[5px] bg-[#454545]`}>
        {tabs.map((t, i) => (
          <div key={i} className={`flex h-full w-[20px] items-center justify-center border-r border-[#2a2a2a] ${i === 0 ? 'rounded-l-[4px] bg-gradient-to-b from-[#6c94d6] to-[#4a76bc]' : 'bg-[#454545]'}`}>
            <div className={i === 0 ? '' : 'opacity-70'}>{t}</div>
          </div>
        ))}
      </div>
    </div>
    <div className="flex min-h-0 flex-1">
      <div className="flex w-[158px] shrink-0 flex-col overflow-hidden pl-[7px] pr-[9px]">
        <div className="mt-[9px] flex h-[20px] shrink-0 items-center pl-[2px]">
          <Pin /><div className="ml-[5px]"><SceneIco /></div><span className="ml-[5px] text-[#111]">Scene</span>
        </div>
        <Sep cls="mt-[8px] -ml-[3px] w-[148px]" />
        <div className="-ml-[7px] w-[158px]"><Head title="Render" dotsAt="left-[136px]" cls="pl-[12px]" /></div>
        <div className={`mt-[9px] flex h-[20px] shrink-0 divide-x divide-[#303030] overflow-hidden rounded-[5px] ${edge} ${light}`}>
          <div className="flex w-[47px] items-center pl-[1px]"><RenderCam star /><span className="-ml-[2px]">Rend</span></div>
          <div className="flex w-[47px] items-center pl-[1px]"><Clapper /><span className="-ml-[2px]">Anim</span></div>
          <div className="flex flex-1 items-center pl-[1px]"><Speaker /><span className="-ml-[1px]">Audio</span></div>
        </div>
        <div className="mt-[5px] flex h-[20px] shrink-0 items-center">
          <span className="ml-[7px] w-[45px] text-[#111]">Display</span>
          <div className={`flex h-[20px] flex-1 overflow-hidden rounded-[5px] ${edge} ${dark}`}>
            <div className="flex flex-1 items-center justify-between pl-[7px] pr-[3px]"><span className="whitespace-nowrap">Image Edi</span><UD /></div>
            <div className={`flex w-[20px] items-center justify-center ${light}`}><LockOpen /></div>
          </div>
        </div>
        <Sep cls="mt-[6px] -ml-[3px] w-[148px]" />
        <div className="-ml-[7px] w-[158px]"><Head title="Dimensions" dotsAt="left-[136px]" cls="pl-[12px]" /></div>
        <div className={`mt-[9px] flex h-[20px] shrink-0 overflow-hidden rounded-[5px] ${edge} ${dark}`}>
          <div className="flex flex-1 items-center justify-between pl-[6px] pr-[3px]"><span>Render Presets</span><UD /></div>
          <div className={`flex w-[20px] items-center justify-center border-l border-[#262626] ${light}`}><Plus /></div>
          <div className={`flex w-[20px] items-center justify-center border-l border-[#262626] ${light}`}><Minus /></div>
        </div>
        <div className="flex shrink-0 gap-[9px]">
          <div className="flex w-[66px] shrink-0 flex-col">
            <Label cls="mt-[9px] pl-[7px]">Resolution:</Label>
            <div className="mt-[2px]"><Group center rows={[{ v: '1920 p' }, { v: '1080 p' }, { pct: '50%' }]} /></div>
            <Label cls="mt-[5px] pl-[7px]">Aspect Ra...</Label>
            <div className="mt-[2px]"><Group center h="h-[39px]" rows={[{ v: ':1.000' }, { v: ':1.000' }]} /></div>
            <div className="mt-[6px] flex justify-between pl-[3px] pr-[12px]"><Check /><Check /></div>
          </div>
          <div className="flex w-[67px] shrink-0 flex-col">
            <Label cls="mt-[9px] pl-[9px]">Frame Ra...</Label>
            <div className="mt-[2px]">
              <div className={`flex h-[59px] flex-col overflow-hidden rounded-[7px] ${edge} ${field}`}>
                {[['Start:', '1'], ['E:', '250'], ['Fra:', '1']].map(([k, v], i) => (
                  <div key={k} className={`flex flex-1 items-center px-[5px] ${i ? 'border-t border-[#262626]' : ''}`}>
                    <ArrowL /><span className="ml-[6px]">{k}</span><span className={`ml-auto mr-[6px] ${num}`}>{v}</span><ArrowR />
                  </div>
                ))}
              </div>
            </div>
            <Label cls="mt-[5px] pl-[9px]">Frame Ra...</Label>
            <div className="mt-[2px]"><DarkDrop label="24 fps" /></div>
            <Label cls="mt-[4px] pl-[9px]">Time Rem</Label>
            <div className={`mt-[3px] flex h-[19px] shrink-0 overflow-hidden rounded-full ${edge} ${field}`}>
              <div className="flex flex-1 items-center justify-between border-r border-[#262626] px-[6px]"><ArrowL c="#888" /><ArrowR c="#888" /></div>
              <div className="flex flex-1 items-center justify-between px-[6px]"><ArrowL c="#888" /><ArrowR c="#888" /></div>
            </div>
          </div>
        </div>
        <Sep cls="mt-[10px] -ml-[3px] w-[148px]" />
        <div className="-ml-[7px] w-[158px]"><Head title="Anti-Aliasing" check on dotsAt="left-[136px]" cls="pl-[12px]" /></div>
        <div className="mt-[8px] flex shrink-0 gap-[9px]">
          <div className={`flex h-[20px] w-[66px] shrink-0 divide-x divide-[#262626] overflow-hidden rounded-[5px] ${edge} ${dark}`}>
            {['5', '8', '11', '16'].map((n) => (
              <div key={n} className={`flex flex-1 items-center justify-center ${n === '8' ? 'bg-gradient-to-b from-[#6c94d6] to-[#4a76bc] text-black' : ''}`}>{n}</div>
            ))}
          </div>
          <DarkDrop label="Mitchell-" w="w-[67px]" />
        </div>
        <div className="mt-[3px] flex h-[20px] shrink-0 items-center gap-[9px]">
          <div className="flex w-[66px] shrink-0 items-center pl-[3px] text-[#111]"><Check /><span className="ml-[8px] whitespace-nowrap">Full Sa</span></div>
          <Group center h="h-[20px]" w="w-[67px]" rows={[{ v: '1.000' }]} />
        </div>
        <Sep cls="mt-[6px] -ml-[3px] w-[148px]" />
        <div className="-ml-[7px] w-[158px]"><Head title="Sampled Motion Blu" open={false} check dotsAt="left-[136px]" cls="pl-[12px]" /></div>
        {['Shading', 'Performance', 'Post Processing', 'Metadata'].map((t) => (
          <React.Fragment key={t}>
            <Sep cls="-ml-[3px] w-[148px]" />
            <div className="-ml-[7px] w-[158px]"><Head title={t} open={false} dotsAt="left-[136px]" cls="pl-[12px]" /></div>
          </React.Fragment>
        ))}
        <Sep cls="-ml-[3px] w-[148px]" />
        <div className="-ml-[7px] w-[158px]"><Head title="Output" dotsAt="left-[136px]" cls="pl-[12px]" /></div>
      </div>
      <div className="mt-[7px] h-[562px] w-[12px] shrink-0 rounded-full bg-[#646464]">
        <div className="h-[412px] rounded-full border border-[#5a5a5a] bg-gradient-to-r from-[#8e8e8e] to-[#6c6c6c]" />
      </div>
    </div>
    <Hatch pos="right-0 top-0" />
    <Hatch pos="bottom-0 left-0" flip />
  </div>
);

// top bar --------------------------------------------------------------------
const TopBar = () => (
  <div className="relative flex h-[27px] shrink-0 items-center border-b border-black bg-[#727272] pl-[8px] pt-[2px]">
    <Sel icon={<InfoIco />} />
    <Menu items={['File', 'Render', 'Window', 'Help']} w="w-[177px]" ml="ml-[12px]" />
    <div className={`ml-[12px] flex h-[20px] w-[191px] shrink-0 overflow-hidden rounded-[5px] ${edge}`}>
      <div className={`flex w-[31px] items-center justify-center gap-[2px] ${dark}`}><LayoutIco /><UD /></div>
      <div className={`flex flex-1 items-center pl-[7px] pt-[2px] ${field}`}>Default</div>
      <div className={`flex w-[20px] items-center justify-center border-l border-[#262626] ${light}`}><Plus /></div>
      <div className={`flex w-[20px] items-center justify-center border-l border-[#262626] ${light}`}><Cross /></div>
    </div>
    <div className={`ml-[6px] flex h-[20px] w-[191px] shrink-0 overflow-hidden rounded-[5px] ${edge}`}>
      <div className={`flex w-[32px] items-center justify-center gap-[2px] ${dark}`}><SceneIco /><UD /></div>
      <div className={`flex flex-1 items-center pl-[7px] pt-[2px] ${field}`}>Scene</div>
      <div className={`flex w-[20px] items-center justify-center border-l border-[#262626] ${light}`}><Plus /></div>
      <div className={`flex w-[20px] items-center justify-center border-l border-[#262626] ${light}`}><Cross /></div>
    </div>
    <DarkDrop label="Blender Render" w="w-[111px]" cls="ml-[17px]" tp="pt-[2px]" />
    <div className="ml-[17px]"><BlenderLogo /></div>
    <span className="ml-[9px] whitespace-nowrap pt-[2px] text-[10.8px] tracking-normal text-[#111]">v2.79 | Verts:6 | Faces:5 | Tris:8 | Objects:1/3 | Lamps:0/1 | Mem:13.38M | Wedge</span>
    <Hatch pos="bottom-0 left-0" flip />
    <Hatch pos="right-0 top-0" />
  </div>
);

export default function App() {
  return (
    <div className="flex h-[744px] w-[1325px] flex-col overflow-hidden bg-[#727272] font-['DejaVu_Sans',sans-serif] text-[10.6px] leading-[13px] tracking-[-0.25px]">
      <TopBar />
      <div className="flex min-h-0 flex-1">
        <div className="flex w-[1151px] shrink-0 flex-col border-r border-black">
          <div className="relative flex h-[622px] shrink-0">
            <Viewport />
            <NPanel />
            <Hatch pos="right-[1px] top-0" />
          </div>
          <Header3D />
          <div className="h-px shrink-0 bg-black" />
          <Timeline />
          <HeaderTime />
        </div>
        <div className="flex min-w-0 flex-1 flex-col">
          <Outliner />
          <div className="h-[2px] shrink-0 bg-black" />
          <Properties />
        </div>
      </div>
    </div>
  );
}
